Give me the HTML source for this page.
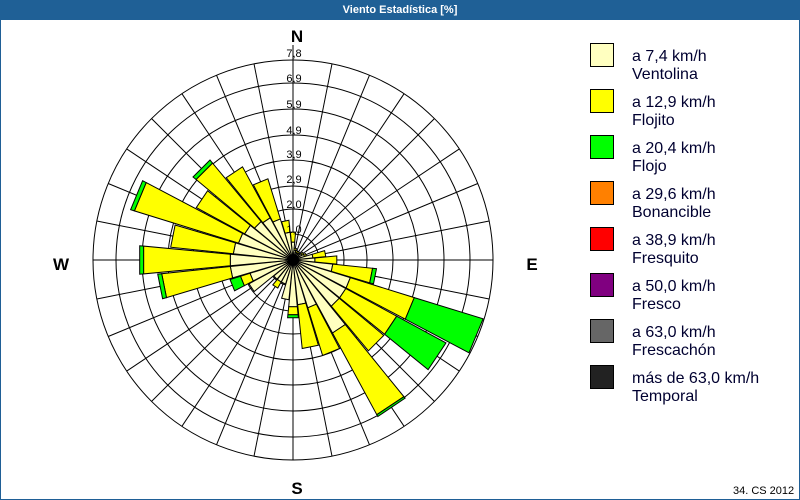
<!DOCTYPE html>
<html><head><meta charset="utf-8">
<style>
html,body{margin:0;padding:0;}
body{width:800px;height:500px;position:relative;background:#fff;font-family:"Liberation Sans",sans-serif;overflow:hidden;}
.frame{position:absolute;left:0;top:0;width:798px;height:498px;border:1px solid #1f5f96;}
.title{position:absolute;left:0;top:0;width:800px;height:20px;background:#1f6096;color:#fff;font-weight:bold;font-size:11px;text-align:center;line-height:20px;}
.lg{position:absolute;left:590px;width:22px;height:22px;border:1px solid #000;}
.lt{position:absolute;left:632px;font-size:16px;line-height:18px;color:#000030;}
.foot{position:absolute;left:733px;top:485px;font-size:11px;color:#000;}
</style></head><body>
<div class="frame"></div>
<div class="title">Viento Estadística [%]</div>
<svg id="s" width="800" height="500" style="position:absolute;left:0;top:0">
<text x="297" y="42" font-size="17" font-weight="bold" text-anchor="middle" font-family="Liberation Sans">N</text>
<text x="297" y="494" font-size="17" font-weight="bold" text-anchor="middle" font-family="Liberation Sans">S</text>
<text x="61" y="270" font-size="17" font-weight="bold" text-anchor="middle" font-family="Liberation Sans">W</text>
<text x="532" y="270" font-size="17" font-weight="bold" text-anchor="middle" font-family="Liberation Sans">E</text>
<g id="g"></g>
<g font-size="11" font-family="Liberation Sans" text-anchor="middle" fill="#000">
<text x="294" y="57">7,8</text><text x="294" y="82">6,9</text><text x="294" y="108">5,9</text><text x="294" y="134">4,9</text><text x="294" y="158">3,9</text><text x="294" y="183">2,9</text><text x="294" y="208">2,0</text><text x="294" y="233">1,0</text>
</g>
</svg>
<div class="lg" style="top:43px;background:#ffffc0"></div><div class="lt" style="top:48px">a 7,4 km/h<br>Ventolina</div>
<div class="lg" style="top:89px;background:#ffff00"></div><div class="lt" style="top:94px">a 12,9 km/h<br>Flojito</div>
<div class="lg" style="top:135px;background:#00ff00"></div><div class="lt" style="top:140px">a 20,4 km/h<br>Flojo</div>
<div class="lg" style="top:181px;background:#ff8000"></div><div class="lt" style="top:186px">a 29,6 km/h<br>Bonancible</div>
<div class="lg" style="top:227px;background:#ff0000"></div><div class="lt" style="top:232px">a 38,9 km/h<br>Fresquito</div>
<div class="lg" style="top:273px;background:#800080"></div><div class="lt" style="top:278px">a 50,0 km/h<br>Fresco</div>
<div class="lg" style="top:319px;background:#666666"></div><div class="lt" style="top:324px">a 63,0 km/h<br>Frescachón</div>
<div class="lg" style="top:365px;background:#222222"></div><div class="lt" style="top:370px">más de 63,0 km/h<br>Temporal</div>
<div class="foot">34. CS 2012</div>
<script>
var cx=293,cy=260,g=document.getElementById('g'),h='';
function P(r,b){var a=b*Math.PI/180;return (cx+r*Math.sin(a)).toFixed(1)+','+(cy-r*Math.cos(a)).toFixed(1);}
[26,51,74,100,125,151,177,200].forEach(function(r){h+='<circle cx="'+cx+'" cy="'+cy+'" r="'+r+'" fill="none" stroke="#000" stroke-width="1"/>';});
for(var i=0;i<32;i++){var b=i*11.25;h+='<line x1="'+cx+'" y1="'+cy+'" x2="'+P(200,b).split(',')[0]+'" y2="'+P(200,b).split(',')[1]+'" stroke="#000" stroke-width="1"/>';}
h+='<line x1="93" y1="260" x2="493" y2="260" stroke="#000"/><line x1="293" y1="45" x2="293" y2="460" stroke="#000"/>';
function W(r0,r1,b,c){var d=5.3;h+='<polygon points="'+P(r0,b-d)+' '+P(r1,b-d)+' '+P(r1,b+d)+' '+P(r0,b+d)+'" fill="'+c+'" stroke="#000" stroke-width="1"/>';}
var C='#ffffc0',Y='#ffff00',G='#00ff00';
var bars=[[0,18,28,28],[11.25,10,12,12],[22.5,8,10,10],[33.75,8,10,10],[45,8,8,8],[56.25,10,12,12],[67.5,12,14,14],[78.75,20,33,33],[90,22,44,44],[101.25,40,80,84],[112.5,60,127,199],[123.75,60,118,174],[135,60,118,118],[146.25,83,176,178],[157.5,50,100,100],[168.75,45,89,89],[180,47,55,58],[191.25,40,40,40],[202.5,25,25,25],[213.75,25,32,32],[225,25,25,25],[236.25,50,50,50],[247.5,45,55,66],[258.75,63,132,136],[270,63,150,154],[281.25,60,123,123],[292.5,57,166,170],[303.75,55,110,110],[315,50,126,130],[326.25,48,106,106],[337.5,43,85,85],[348.75,28,40,40]];
bars.forEach(function(x){var b=x[0];W(0,x[1],b,C);if(x[2]>x[1])W(x[1],x[2],b,Y);if(x[3]>x[2])W(x[2],x[3],b,G);});
h+='<circle cx="'+cx+'" cy="'+cy+'" r="5" fill="#000"/>';
g.innerHTML=h;
</script>
</body></html>
